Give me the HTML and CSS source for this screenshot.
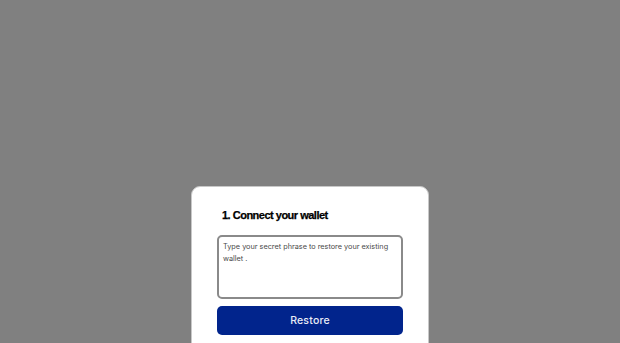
FILE: index.html
```
<!DOCTYPE html>
<html>
<head>
<meta charset="utf-8">
<link rel="stylesheet" href="styles.css">
</head>
<body>
<div class="page">
  <div class="card">
    <h2 class="title">1. Connect your wallet</h2>
    <div class="phrase">Type your secret phrase to restore your existing wallet .</div>
    <div class="btn">Restore</div>
  </div>
</div>
</body>
</html>
```
FILE: styles.css
```
html, body { margin: 0; padding: 0; }
body { background: #808080; width: 620px; height: 343px; overflow: hidden; }
.page { display: flex; justify-content: center; padding-top: 186px; }
.card {
  width: 238px;
  height: 200px;
  box-sizing: border-box;
  background: #fff;
  border: 1px solid #c8c8c8;
  border-radius: 9px;
  padding: 20px 25px 0 25px;
}
.title {
  margin: 0 0 12px 5px;
  font-family: "Liberation Sans", Arial, sans-serif;
  font-weight: bold;
  font-size: 11px;
  line-height: 16px;
  color: #000;
  letter-spacing: -0.5px;
  -webkit-text-stroke: 0.25px #000;
}
.phrase {
  height: 64px;
  box-sizing: border-box;
  border: 2px solid #8a8a8a;
  border-radius: 5px;
  padding: 4px 4px;
  font-family: Inter, "Open Sans", sans-serif;
  font-size: 7.3px;
  line-height: 11.5px;
  color: #4a4a4a;
}
.btn {
  margin-top: 7px;
  height: 29px;
  background: #01248c;
  border-radius: 5px;
  color: #e8ecf6;
  font-family: Inter, "Liberation Sans", sans-serif;
  font-weight: 500;
  font-size: 10.5px;
  display: flex;
  align-items: center;
  justify-content: center;
  letter-spacing: 0.2px;
}
```
